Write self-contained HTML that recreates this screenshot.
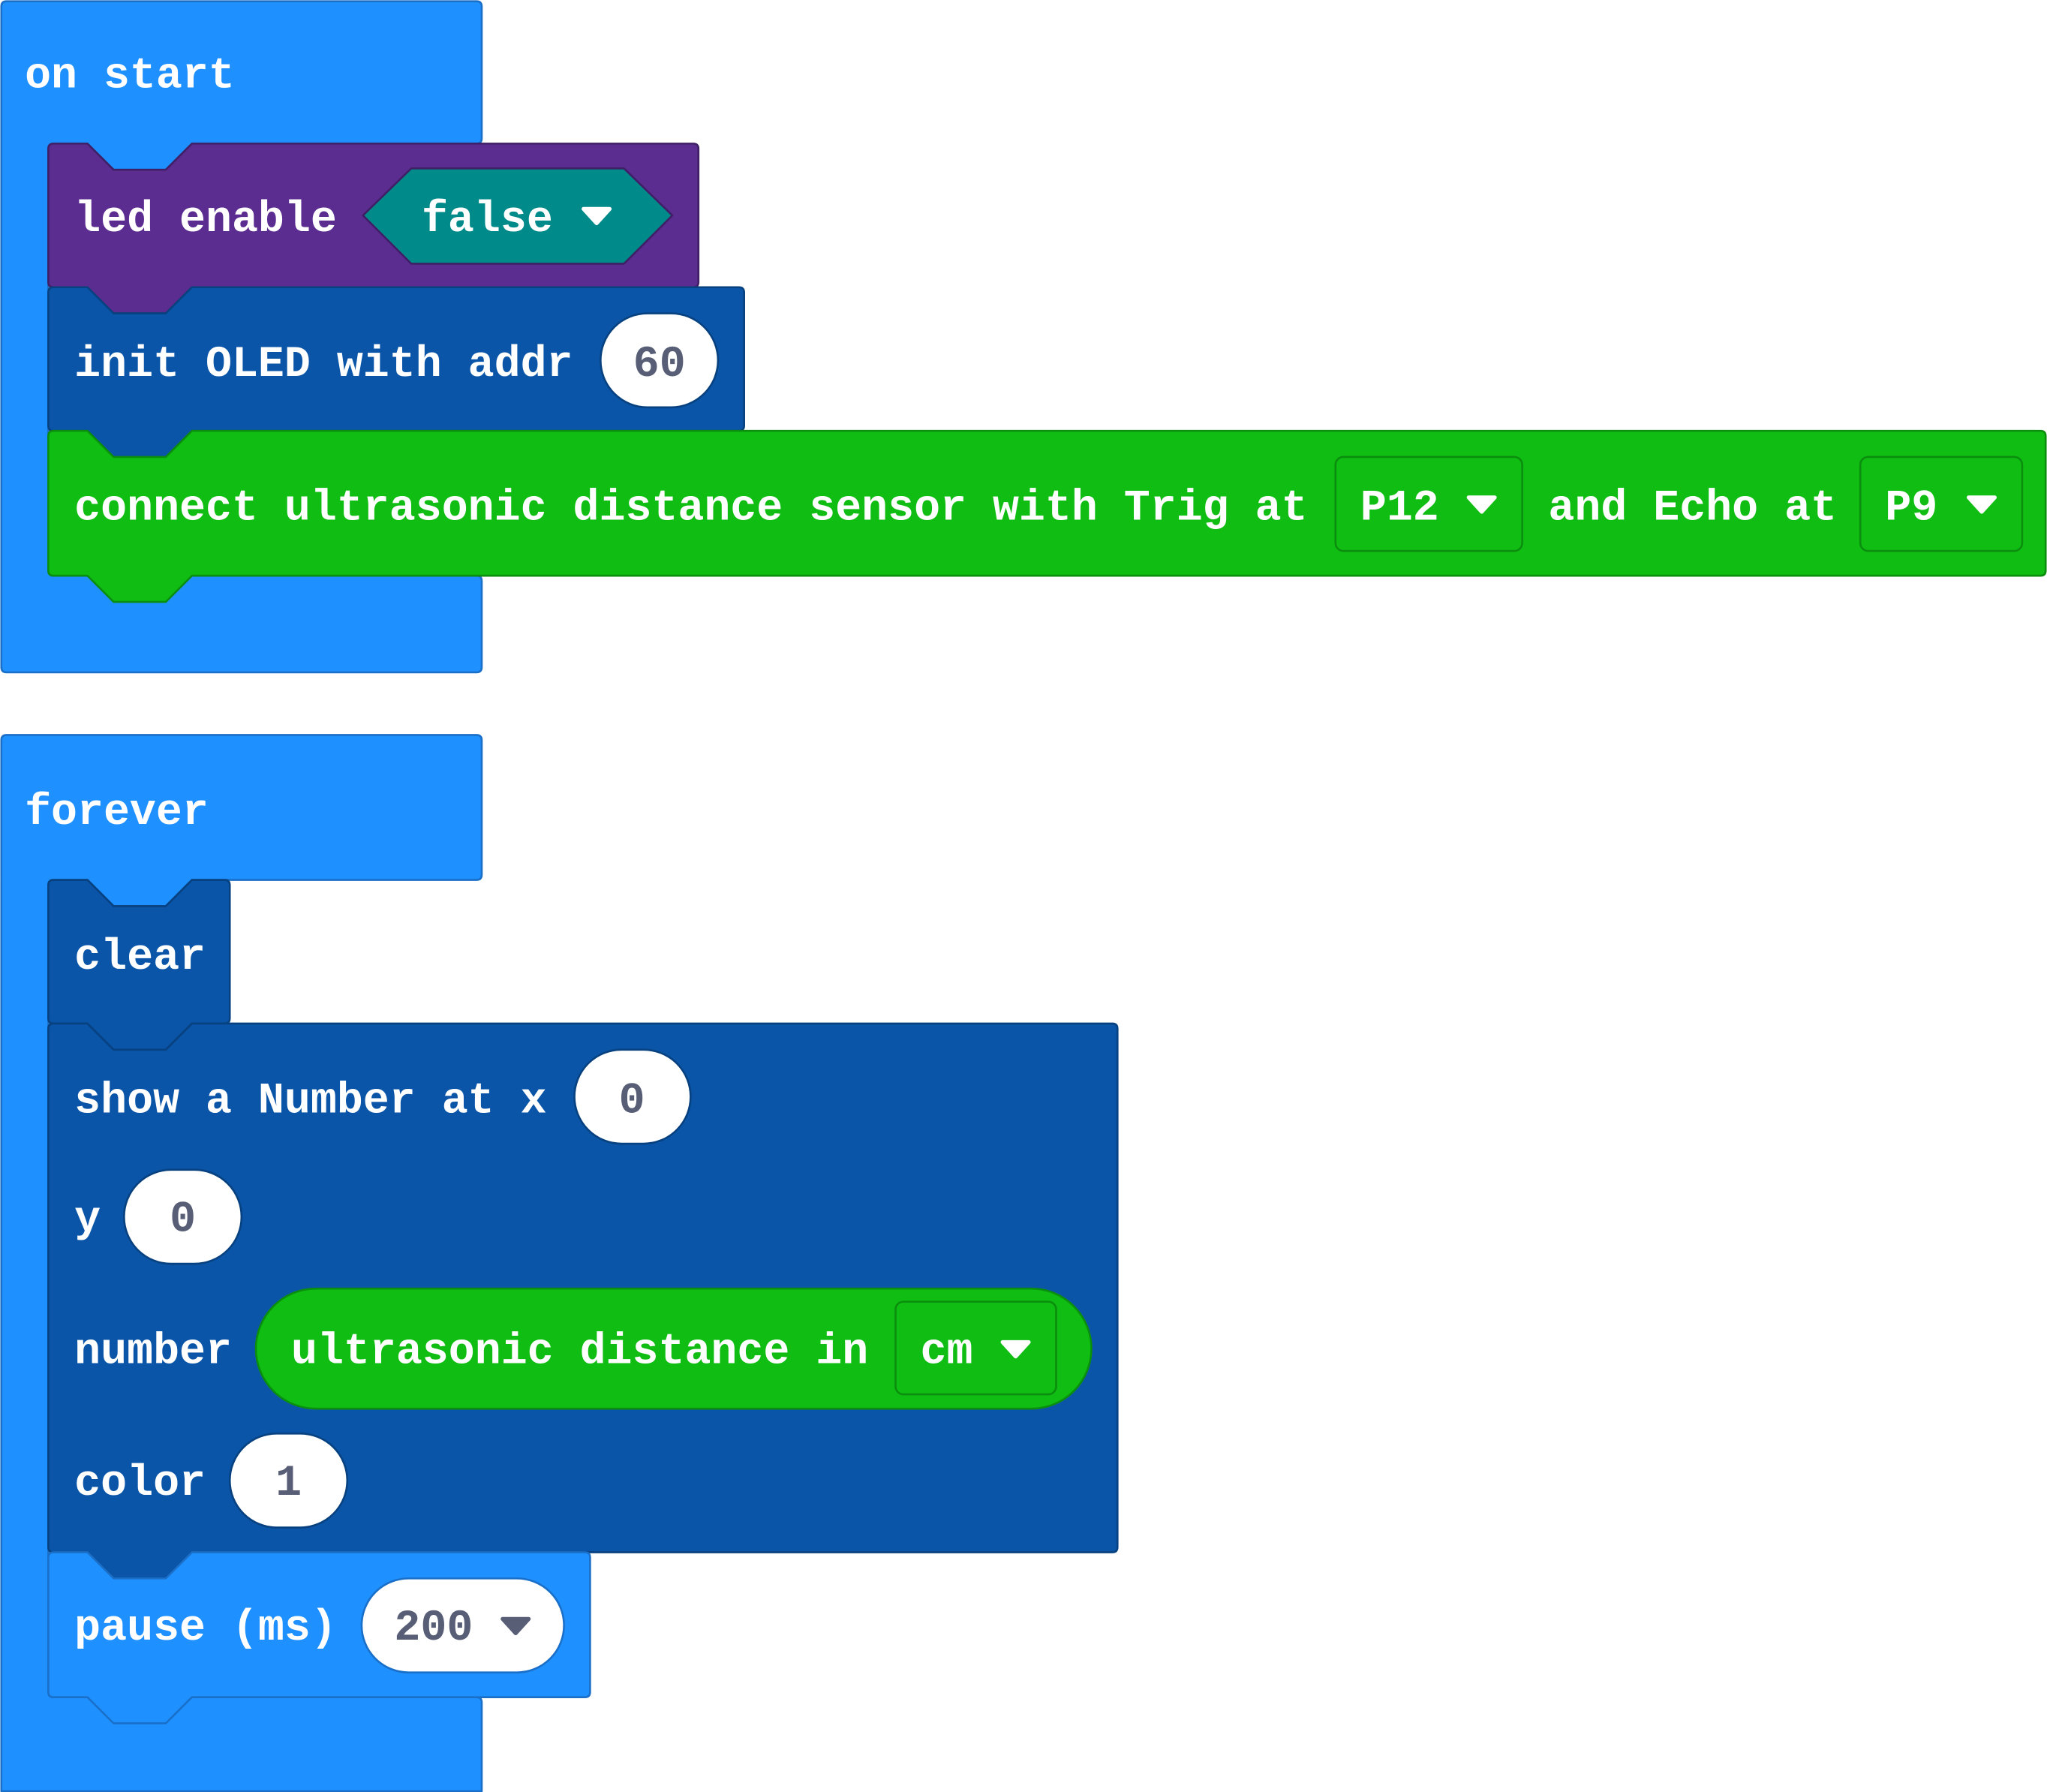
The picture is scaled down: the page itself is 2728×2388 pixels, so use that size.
<!DOCTYPE html>
<html><head><meta charset="utf-8"><style>
html,body{margin:0;padding:0;background:#fff;}
svg{display:block;}
text{font-family:"Liberation Mono",monospace;font-weight:bold;font-size:33.5px;fill:#fff;}
.g{fill:#575e75;}
</style></head><body>
<svg width="2728" height="2388" viewBox="0 0 1568 1372.6" xmlns="http://www.w3.org/2000/svg">
<g stroke-width="1.5" stroke-linejoin="round">
<!-- on start C block -->
<path d="M1,5 Q1,1 5,1 H365 Q369,1 369,5 V106 Q369,110 365,110 H147 L127,130 H87 L67,110 H41 Q37,110 37,114 V437 Q37,441 41,441 H365 Q369,441 369,445 V511 Q369,515 365,515 H5 Q1,515 1,511 Z" fill="#1e90ff" stroke="#1a6fc8"/>
<!-- led enable -->
<path d="M37,114 Q37,110 41,110 H67 L87,130 H127 L147,110 H531 Q535,110 535,114 V216 Q535,220 531,220 H147 L127,240 H87 L67,220 H41 Q37,220 37,216 Z" fill="#5c2d91" stroke="#3f1f66"/>
<polygon points="278,165 315,129 478,129 515,165 478,202 315,202" fill="#008a8a" stroke="#3f1f66"/>
<!-- init OLED -->
<path d="M37,224 Q37,220 41,220 H67 L87,240 H127 L147,220 H566 Q570,220 570,224 V326 Q570,330 566,330 H147 L127,350 H87 L67,330 H41 Q37,330 37,326 Z" fill="#0a55a8" stroke="#07417f"/>
<rect x="460" y="240" width="90" height="72" rx="36" fill="#fff" stroke="#07417f"/>
<!-- connect -->
<path d="M37,334 Q37,330 41,330 H67 L87,350 H127 L147,330 H1563 Q1567,330 1567,334 V437 Q1567,441 1563,441 H147 L127,461 H87 L67,441 H41 Q37,441 37,437 Z" fill="#0fbd13" stroke="#0b8e0e"/>
<rect x="1023" y="350" width="143" height="72" rx="6" fill="#0fbd13" stroke="#0b8e0e"/>
<rect x="1425" y="350" width="124" height="72" rx="6" fill="#0fbd13" stroke="#0b8e0e"/>

<!-- forever C block -->
<path d="M1,567 Q1,563 5,563 H365 Q369,563 369,567 V670 Q369,674 365,674 H147 L127,694 H87 L67,674 H41 Q37,674 37,678 V1296 Q37,1300 41,1300 H365 Q369,1300 369,1304 V1372 H1 Z" fill="#1e90ff" stroke="#1a6fc8"/>
<!-- clear -->
<path d="M37,678 Q37,674 41,674 H67 L87,694 H127 L147,674 H172 Q176,674 176,678 V780 Q176,784 172,784 H147 L127,804 H87 L67,784 H41 Q37,784 37,780 Z" fill="#0a55a8" stroke="#07417f"/>
<!-- show number -->
<path d="M37,788 Q37,784 41,784 H67 L87,804 H127 L147,784 H852 Q856,784 856,788 V1185 Q856,1189 852,1189 H147 L127,1209 H87 L67,1189 H41 Q37,1189 37,1185 Z" fill="#0a55a8" stroke="#07417f"/>
<rect x="440" y="804" width="89" height="72" rx="36" fill="#fff" stroke="#07417f"/>
<rect x="95" y="896" width="90" height="72" rx="36" fill="#fff" stroke="#07417f"/>
<rect x="196" y="987" width="640" height="92" rx="46" fill="#0fbd13" stroke="#0b8e0e"/>
<rect x="686" y="997" width="123" height="71" rx="6" fill="#0fbd13" stroke="#0b8e0e"/>
<rect x="176" y="1098" width="90" height="72" rx="36" fill="#fff" stroke="#07417f"/>
<!-- pause -->
<path d="M37,1193 Q37,1189 41,1189 H67 L87,1209 H127 L147,1189 H448 Q452,1189 452,1193 V1296 Q452,1300 448,1300 H147 L127,1320 H87 L67,1300 H41 Q37,1300 37,1296 Z" fill="#1e90ff" stroke="#1a6fc8"/>
<rect x="277" y="1209" width="155" height="72" rx="36" fill="#fff" stroke="#1a6fc8"/>
</g>
<!-- arrows -->
<g stroke-linejoin="round" stroke-width="3">
<path d="M447,160 H467 L457,171 Z" fill="#fff" stroke="#fff"/>
<path d="M1125,381 H1145 L1135,392 Z" fill="#fff" stroke="#fff"/>
<path d="M1508,381 H1528 L1518,392 Z" fill="#fff" stroke="#fff"/>
<path d="M768,1028 H788 L778,1039 Z" fill="#fff" stroke="#fff"/>
<path d="M385,1240 H405 L395,1251 Z" fill="#575e75" stroke="#575e75"/>
</g>
<!-- texts -->
<text x="19" y="67">on start</text>
<text x="57" y="177">led enable</text>
<text x="323" y="177">false</text>
<text x="57" y="288">init OLED with addr</text>
<text x="485" y="288" class="g">60</text>
<text x="57" y="398">connect ultrasonic distance sensor with Trig at</text>
<text x="1042" y="398">P12</text>
<text x="1186" y="398">and Echo at</text>
<text x="1444" y="398">P9</text>
<text x="19" y="631">forever</text>
<text x="57" y="742">clear</text>
<text x="57" y="852">show a Number at x</text>
<text x="474" y="852" class="g">0</text>
<text x="57" y="943">y</text>
<text x="130" y="943" class="g">0</text>
<text x="57" y="1044">number</text>
<text x="223" y="1044">ultrasonic distance in</text>
<text x="705" y="1044">cm</text>
<text x="57" y="1145">color</text>
<text x="211" y="1145" class="g">1</text>
<text x="57" y="1256">pause (ms)</text>
<text x="302" y="1256" class="g">200</text>
</svg>
</body></html>
